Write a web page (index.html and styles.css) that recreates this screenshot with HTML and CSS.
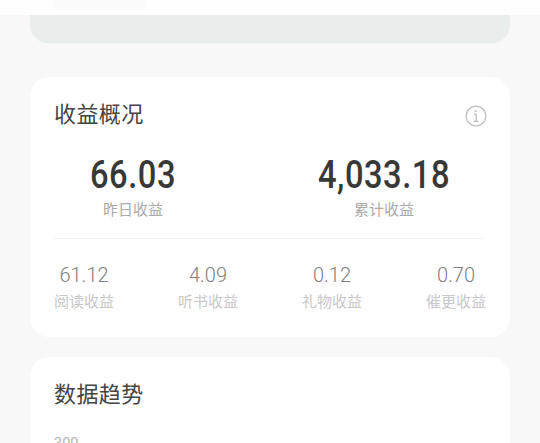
FILE: index.html
```html
<!DOCTYPE html>
<html lang="zh-CN">
<head>
  <meta charset="UTF-8">
  <meta name="viewport" content="width=device-width, initial-scale=1.0">
  <title>收益概况</title>
  <link rel="stylesheet" href="styles.css">
</head>
<body>
  <header class="top-bar">
    <div class="top-chip"></div>
  </header>

  <main class="page">
    <div class="banner"></div>

    <!-- 收益概况 -->
    <section class="card income">
      <div class="card-head">
        <h2>收益概况</h2>
        <svg class="info-icon" viewBox="0 0 22 22" aria-hidden="true">
          <circle cx="11" cy="11" r="9.9"></circle>
          <path d="M9.6 6.2h2.4M10.9 5.4v1.6M9 9.4h2.2v7M8.6 16.4h5"></path>
        </svg>
      </div>

      <div class="totals">
        <div class="total">
          <div class="total-num">66.03</div>
          <div class="total-label">昨日收益</div>
        </div>
        <div class="total">
          <div class="total-num">4,033.18</div>
          <div class="total-label">累计收益</div>
        </div>
      </div>

      <div class="breakdown">
        <div class="item">
          <div class="item-num">61.12</div>
          <div class="item-label">阅读收益</div>
        </div>
        <div class="item">
          <div class="item-num">4.09</div>
          <div class="item-label">听书收益</div>
        </div>
        <div class="item">
          <div class="item-num">0.12</div>
          <div class="item-label">礼物收益</div>
        </div>
        <div class="item">
          <div class="item-num">0.70</div>
          <div class="item-label">催更收益</div>
        </div>
      </div>
    </section>

    <!-- 数据趋势 -->
    <section class="card trend">
      <h2>数据趋势</h2>
      <div class="axis-label">300</div>
    </section>
  </main>
</body>
</html>
```

FILE: styles.css
```css
html, body {
  height: 443px;
}

body {
  margin: 0;
  overflow: hidden;
  font-family: Roboto, "Noto Sans CJK SC", sans-serif;
  background-color: #f8f8f8;
  color: #333;
}

.top-bar {
  height: 15px;
  background-color: #fefefe;
}

.top-chip {
  width: 92px;
  height: 10px;
  margin-left: 53px;
  background-color: #fbfbfb;
  border-radius: 0 0 6px 6px;
}

.page {
  padding: 0 30px;
}

.banner {
  height: 28px;
  background-color: #e9eeec;
  border-radius: 0 0 18px 18px;
}

.card {
  background-color: #fff;
  border-radius: 20px;
  padding: 0 24px;
}

.card h2 {
  margin: 0;
  font-size: 22px;
  line-height: 30px;
  font-weight: 400;
  letter-spacing: 0.4px;
  color: #444;
}

.income {
  height: 260px;
  margin-top: 34px;
  box-sizing: border-box;
  padding-top: 23px;
}

.card-head {
  display: flex;
  justify-content: space-between;
  align-items: center;
}

.info-icon {
  width: 22px;
  height: 22px;
  margin-top: 2px;
  margin-right: -1px;
  fill: none;
  stroke: #bdbdbd;
  stroke-width: 1.3;
}

.totals {
  display: flex;
  margin-top: 23px;
  padding-bottom: 18px;
  border-bottom: 1px solid #f3f3f3;
}

.total {
  flex: 1;
  text-align: center;
}

.total:first-child {
  flex: 0 0 158px;
}

.total:last-child {
  padding-left: 70px;
}

/* digits are a narrow DIN cut in the original, squeeze Roboto to fit */
.total-num {
  font-size: 38px;
  line-height: 44px;
  font-weight: 500;
  letter-spacing: 0.6px;
  color: #383838;
  transform: scaleX(0.86);
}

.total-label {
  margin-top: 3px;
  font-size: 15px;
  line-height: 20px;
  color: #aaa;
}

.breakdown {
  display: flex;
  justify-content: space-between;
  margin-top: 23px;
}

.item {
  text-align: center;
}

.item-num {
  font-size: 20px;
  line-height: 26px;
  font-weight: 300;
  color: #808080;
}

.item-label {
  margin-top: 1px;
  font-size: 15px;
  line-height: 26px;
  color: #c8c8c8;
}

.trend {
  margin-top: 20px;
  padding-top: 23px;
  height: 120px;
}

.axis-label {
  margin-top: 26px;
  font-size: 14.5px;
  line-height: 16px;
  color: #b4b4b4;
}
```
